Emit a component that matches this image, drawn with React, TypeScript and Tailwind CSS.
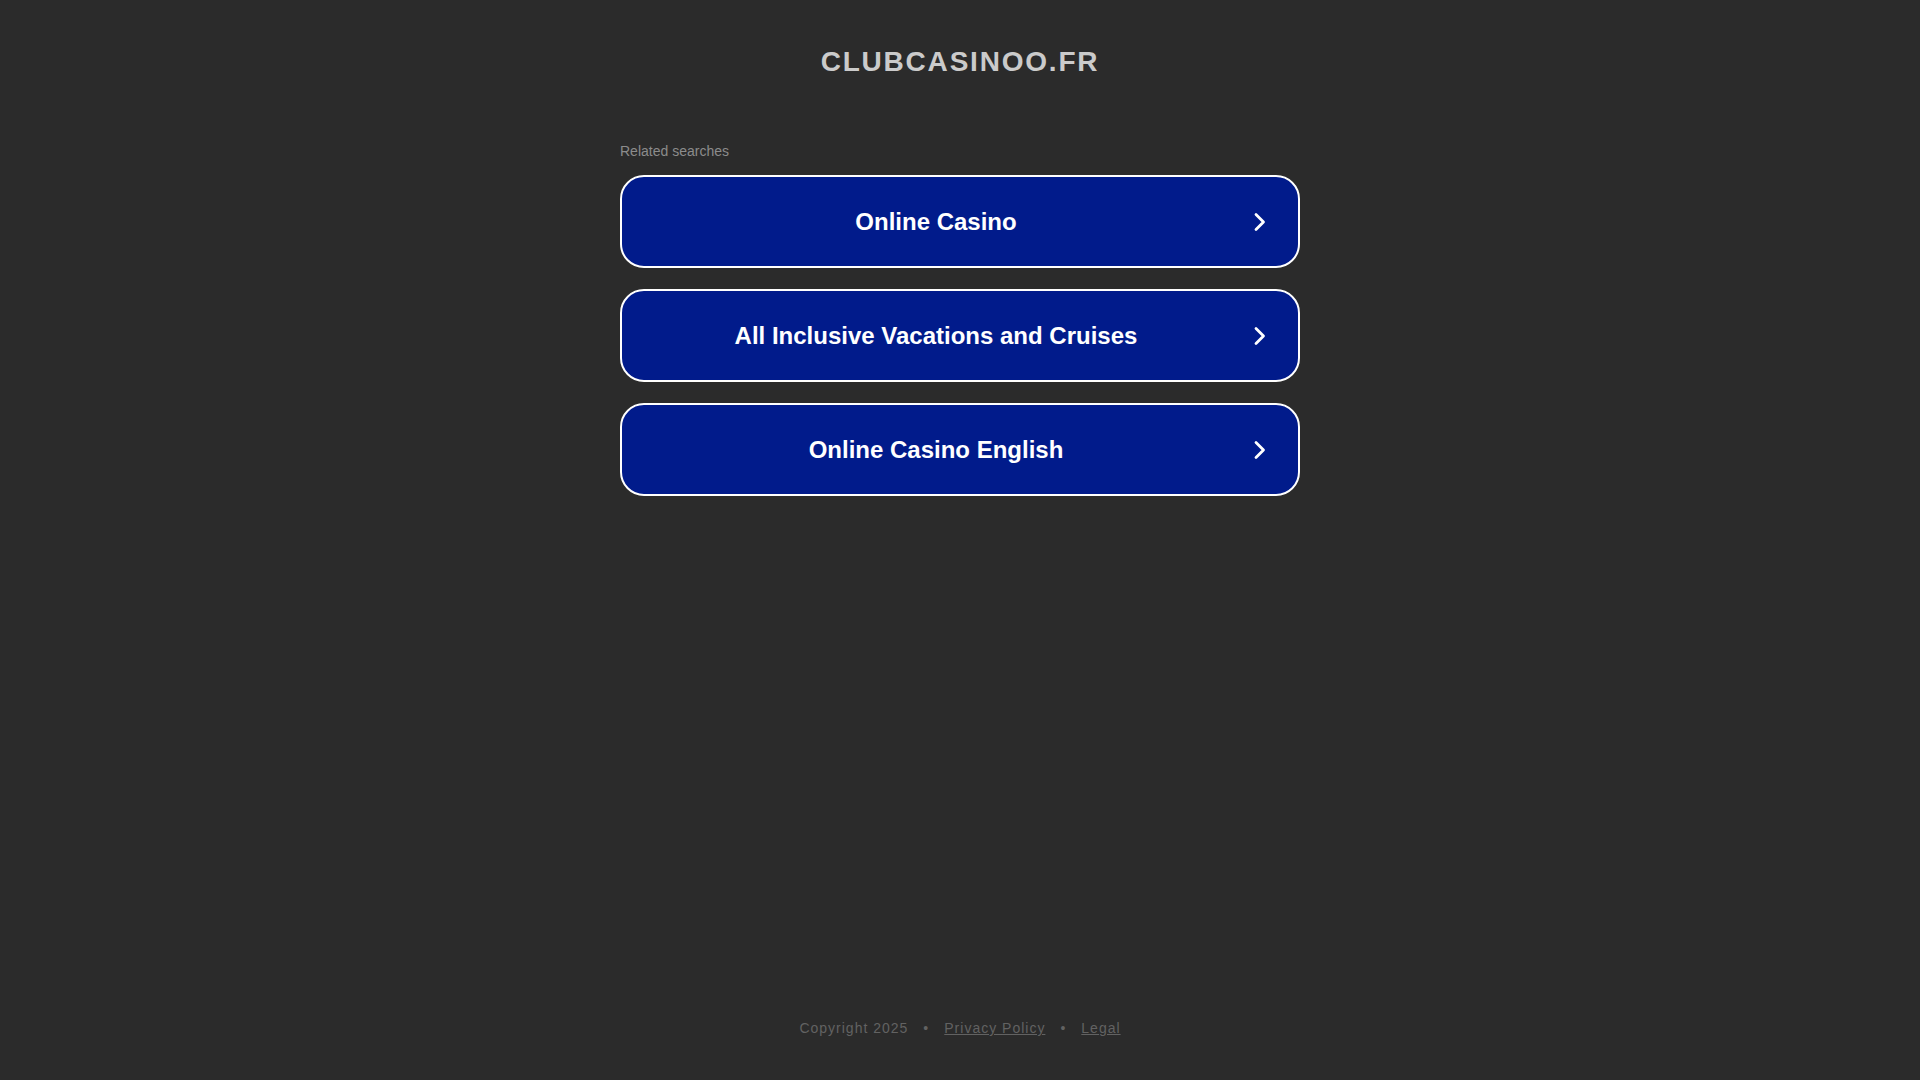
const searches = [
  "Online Casino",
  "All Inclusive Vacations and Cruises",
  "Online Casino English",
];

function Chevron() {
  return (
    <svg width="14" height="20" viewBox="0 0 14 20" fill="none" className="shrink-0">
      <path d="M3 2.5 L10.5 10 L3 17.5" stroke="white" strokeWidth="2.8" strokeLinecap="round" strokeLinejoin="round" />
    </svg>
  );
}

export default function App() {
  return (
    <div className="min-h-screen bg-[#2b2b2b] flex flex-col items-center font-['Liberation_Sans',Arial,sans-serif]">
      {/* domain title */}
      <h1 className="mt-[45px] text-[28px] leading-[34px] font-bold tracking-[1.8px] text-[#cbcbcb]">
        CLUBCASINOO.FR
      </h1>

      {/* related searches */}
      <div className="w-[680px] mt-[64px] flex flex-col">
        <p className="text-[14px] leading-[16px] text-[#8c8c8c]">Related searches</p>
        <div className="mt-[16px] flex flex-col gap-[21px]">
          {searches.map((s) => (
            <a
              key={s}
              href="#"
              className="h-[93px] flex items-center rounded-[24px] border-2 border-white bg-[#011b8b] text-white pr-[31px]"
            >
              <span className="flex-1 text-center text-[24px] leading-[28px] font-bold mr-[3px]">{s}</span>
              <Chevron />
            </a>
          ))}
        </div>
      </div>

      {/* footer */}
      <footer className="mt-auto pb-[42px] text-[14px] leading-[20px] tracking-[1px] text-[#626262] flex items-center">
        <span>Copyright 2025</span>
        <span className="mx-[15px]">•</span>
        <a href="#" className="underline">Privacy Policy</a>
        <span className="mx-[15px]">•</span>
        <a href="#" className="underline">Legal</a>
      </footer>
    </div>
  );
}
